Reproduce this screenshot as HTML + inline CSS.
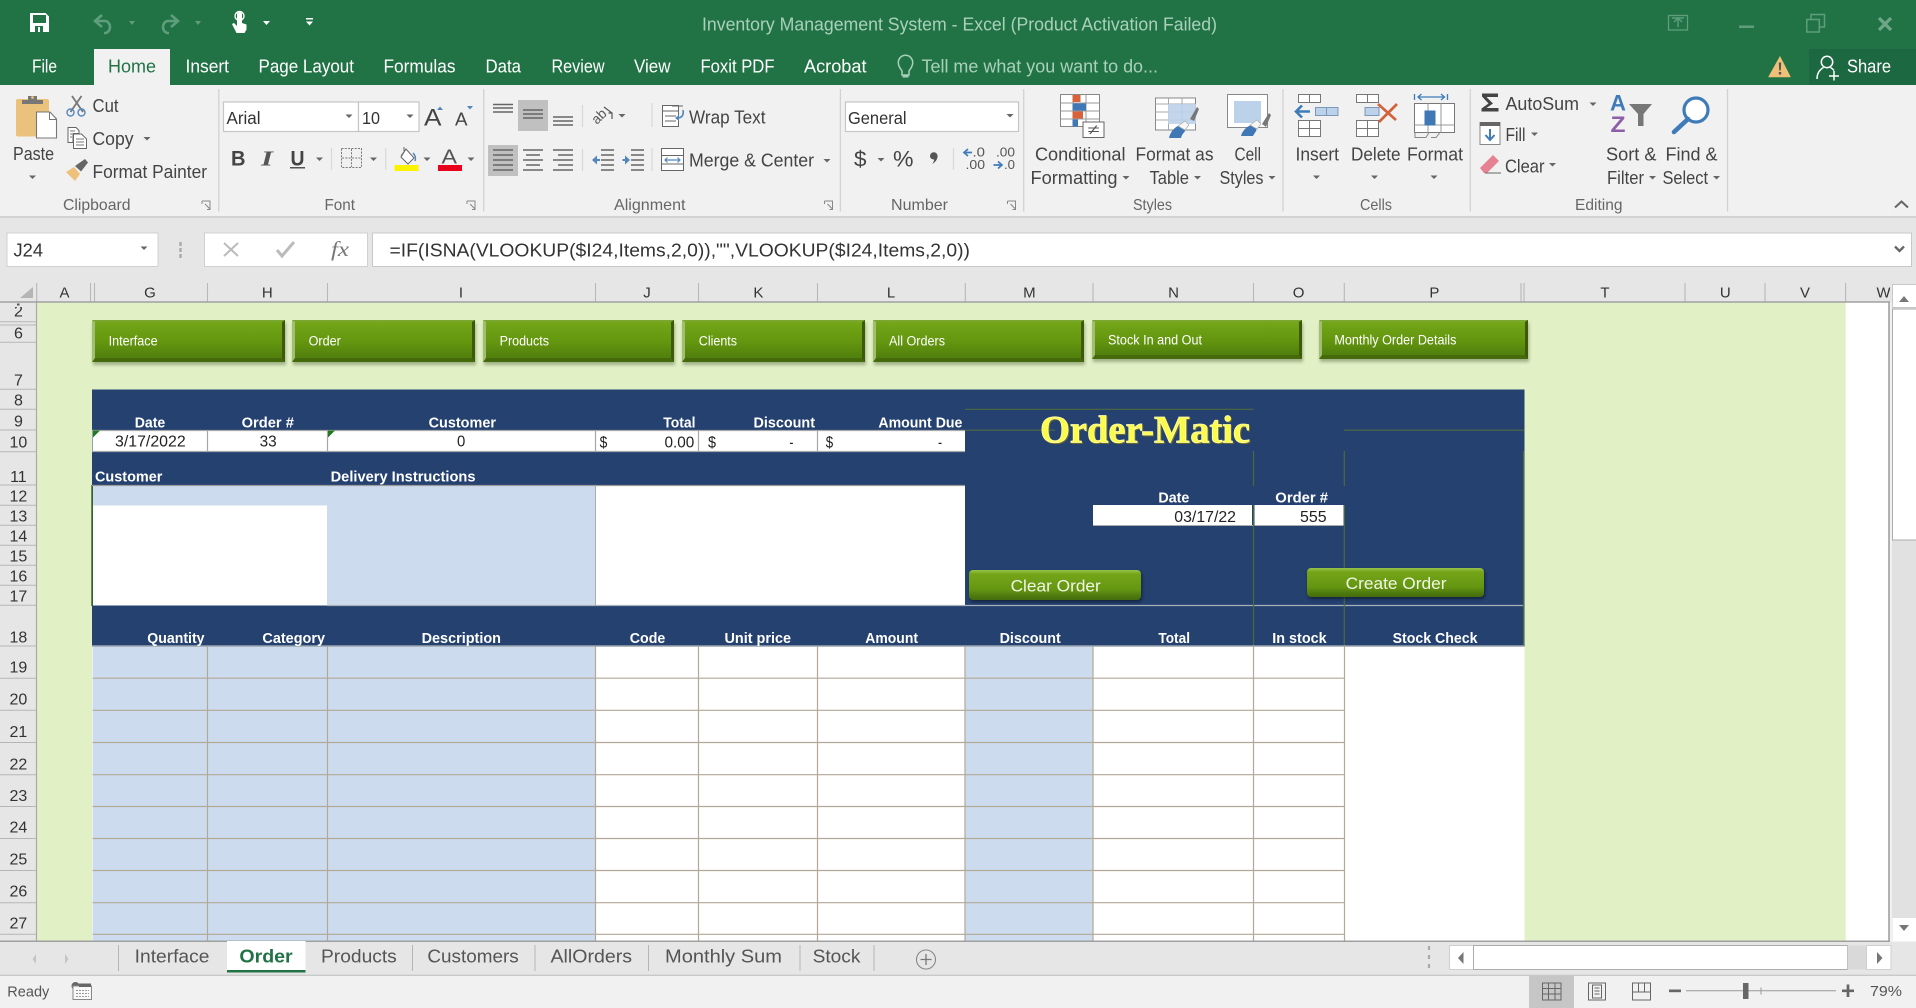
<!DOCTYPE html>
<html lang="en"><head><meta charset="utf-8"><title>Inventory Management System - Excel</title>
<style>
html,body{margin:0;padding:0;background:#f1f1f1}
#p{position:relative;width:1916px;height:1008px;overflow:hidden}
svg{position:absolute;left:0;top:0;display:block}
svg text{font-family:"Liberation Sans",Arial,sans-serif}
.r{font-size:18px;fill:#444}
.w{font-size:18px;fill:#fff}
.g{font-size:16px;fill:#666}
.c{font-size:15px;fill:#333;text-anchor:middle}
.n{font-size:16px;fill:#333;text-anchor:middle}
.l{font-size:14.5px;font-weight:bold;fill:#fff}
.d{font-size:16px;fill:#222}
.t{font-size:18px;fill:#555}
.k{fill:#666}
.a{stroke:#666;stroke-width:1.4;fill:none}
.ln{stroke:#b3a898;stroke-width:1.2}
.gl{stroke:#4d6a3f;stroke-width:1.2;fill:none}
.b{position:absolute;box-sizing:border-box;border-style:solid;border-width:2px 3px 4px 3px;border-color:#7ba62f #3d5a0a #456a0c #a2be72;background:linear-gradient(#74a619,#64960f 55%,#507f0d);box-shadow:1px 3px 3px rgba(40,60,20,.35)}
.o{position:absolute;box-sizing:border-box;border-radius:4px;background:linear-gradient(#98c24a 0,#74a518 14%,#659612 65%,#4c780e 88%,#446c0c);box-shadow:1px 2px 3px rgba(0,0,0,.45)}
.nb{font-size:13.5px;fill:#fff}
.ob{font-size:16.5px;fill:#f1f6e4}
</style></head><body><div id="p">
<svg width="1916" height="1008" viewBox="0 0 1916 1008">
<!-- base -->
<rect width="1916" height="1008" fill="#f1f1f1"/>
<rect width="1916" height="85" fill="#217346"/>
<rect x="94" y="49" width="76" height="36" fill="#f1f1f1"/>
<rect x="1809" y="49" width="107" height="36" fill="#1c6840"/>
<rect y="216" width="1916" height="2" fill="#d2d2d2"/>
<rect y="218" width="1916" height="84" fill="#e6e6e6"/>

<!-- QAT -->
<path d="M30 13h15.500l3.500 3.500V32H30z" fill="#fff"/><rect x="33" y="15" width="13" height="8" fill="#217346"/><rect x="35" y="26" width="8" height="6" fill="#217346"/><rect x="38" y="27" width="2" height="5" fill="#fff"/>
<path d="M97 21h9a6.500 6.500 0 0 1 0 12h-2M102 15l-7 6 7 6" fill="none" stroke="#5f9d7d" stroke-width="2.600"/>
<path d="M129 21h6l-3 4z" fill="#5f9d7d"/>
<path d="M176 21h-9a6.500 6.500 0 0 0 0 12h2M171 15l7 6-7 6" fill="none" stroke="#5f9d7d" stroke-width="2.600"/>
<path d="M195 21h6l-3 4z" fill="#5f9d7d"/>
<path d="M237 14a2.600 2.600 0 0 1 5 0v9l4.500 1.500v5l-2 3.500h-8l-4.500-9 2-1 3 3z" fill="#fff"/><circle cx="239.500" cy="16" r="4.500" fill="none" stroke="#fff" stroke-width="1.400"/>
<path d="M263 21h7l-3.500 4z" fill="#fff"/>
<path d="M306 18h7v1.500h-7zM306 21.500h7l-3.500 4z" fill="#fff"/>
<text x="702" y="30.500" font-size="18" fill="#a9d0b9" textLength="515" lengthAdjust="spacingAndGlyphs">Inventory Management System - Excel (Product Activation Failed)</text>
<!-- window controls -->
<rect x="1668.500" y="15.500" width="19" height="14.500" fill="none" stroke="#5f9d7d" stroke-width="1.300"/><path d="M1678 27v-8M1674 22l4-4 4 4M1672 18h12" fill="none" stroke="#5f9d7d" stroke-width="1.400"/>
<rect x="1739" y="25.500" width="15" height="2.500" fill="#5f9d7d"/>
<path d="M1806.800 19.500h12.500v12.500h-12.500zM1811 19v-4.500h13.500v12.500h-5" fill="none" stroke="#5f9d7d" stroke-width="1.500"/>
<path d="M1879 18l12 12M1891 18l-12 12" stroke="#6fa688" stroke-width="3.200" fill="none"/>
<!-- tabs -->
<g class="w">
<text class="w" x="32" y="72.500" textLength="25" lengthAdjust="spacingAndGlyphs">File</text>
<text x="108" y="72.500" font-size="18" fill="#217346" textLength="48" lengthAdjust="spacingAndGlyphs">Home</text>
<text class="w" x="185.500" y="72.500" textLength="43.500" lengthAdjust="spacingAndGlyphs">Insert</text>
<text class="w" x="258.500" y="72.500" textLength="95.500" lengthAdjust="spacingAndGlyphs">Page Layout</text>
<text class="w" x="383.500" y="72.500" textLength="72" lengthAdjust="spacingAndGlyphs">Formulas</text>
<text class="w" x="485.500" y="72.500" textLength="35.500" lengthAdjust="spacingAndGlyphs">Data</text>
<text class="w" x="551.500" y="72.500" textLength="53" lengthAdjust="spacingAndGlyphs">Review</text>
<text class="w" x="634" y="72.500" textLength="36.500" lengthAdjust="spacingAndGlyphs">View</text>
<text class="w" x="700.500" y="72.500" textLength="74" lengthAdjust="spacingAndGlyphs">Foxit PDF</text>
<text class="w" x="804" y="72.500" textLength="62.500" lengthAdjust="spacingAndGlyphs">Acrobat</text>
</g>
<text x="921.500" y="72.500" font-size="18" fill="#a9d0b9" textLength="236.500" lengthAdjust="spacingAndGlyphs">Tell me what you want to do...</text>
<path d="M902 75v-3.500c0-2-3.700-3.500-3.700-9a7.200 7.200 0 0 1 14.400 0c0 5.500-3.700 7-3.700 9V75z" fill="none" stroke="#a9d0b9" stroke-width="1.500"/><rect x="902.500" y="74.500" width="6" height="3" fill="#a9d0b9"/>
<path d="M1780 56l10.500 20.500a.5.5 0 0 1-.5.800h-21a.5.5 0 0 1-.5-.8z" fill="#eec078"/><path d="M1778.800 62.500h2.400l-.4 8h-1.600zM1778.800 72h2.400v2.500h-2.400z" fill="#555"/>
<circle cx="1827" cy="62" r="5.700" fill="none" stroke="#fff" stroke-width="1.500"/><path d="M1817 79c0-6 3-9.500 6.500-11.500M1830.500 67.500c1.500.8 2.500 1.800 3.500 3M1829 76h10M1834 71v9.500" fill="none" stroke="#fff" stroke-width="1.500"/>
<text class="w" x="1847" y="72.500" textLength="44" lengthAdjust="spacingAndGlyphs">Share</text>

<!-- separators -->
<path d="M218.800 89v122.500M483.700 89v122.500M840.400 89v122.500M1023.700 89v122.500M1283 89v122.500M1470.300 89v122.500M1727.500 89v122.500" stroke="#d2d2d2" stroke-width="1.300"/>
<path d="M582.500 105v22M582.500 149v22M652 103v24M652 148v23M331.500 148v22M385.700 148v22M953.500 148v22" stroke="#d9d9d9" stroke-width="1.200"/>

<!-- Clipboard -->
<rect x="16" y="99" width="33" height="37.500" rx="2" fill="#eac27b"/><path d="M22 104v-4h6v-4h9v4h6v4z" fill="#777"/><circle cx="32.500" cy="97.500" r="1.400" fill="#eac27b"/>
<path d="M36.500 112h13.500l6.500 7v19H36.500z" fill="#fff" stroke="#777" stroke-width="1.100"/><path d="M49.500 112v7.500h7" fill="none" stroke="#777"/>
<path d="M72 96l11 16M81.500 96l-11 16" stroke="#777" stroke-width="1.800" fill="none"/><circle cx="70.500" cy="112.500" r="3.500" fill="none" stroke="#5587bb" stroke-width="1.400"/><circle cx="81.500" cy="112.500" r="3.500" fill="none" stroke="#5587bb" stroke-width="1.400"/>
<path d="M68 127.500h8l3 3v3h-6v9h-5zM73.500 134h8l5 5v9.500h-13z" fill="#fff" stroke="#666" stroke-width="1"/><path d="M76 139h8M76 142h8M76 145h8M70 131h5M70 134h2M70 137h2" stroke="#777" stroke-width=".9"/>
<path d="M66 172l8-5 6 7-5 7z" fill="#eec17a"/><path d="M75 166l10-7 3 3.500-7 9z" fill="#666"/>
<text class="r" x="13" y="160" textLength="41" lengthAdjust="spacingAndGlyphs">Paste</text>
<text class="r" x="92.500" y="112" textLength="26" lengthAdjust="spacingAndGlyphs">Cut</text>
<text class="r" x="92.500" y="145" textLength="41" lengthAdjust="spacingAndGlyphs">Copy</text>
<text class="r" x="92.500" y="178" textLength="114.500" lengthAdjust="spacingAndGlyphs">Format Painter</text>
<text class="g" x="63" y="210" textLength="67.500" lengthAdjust="spacingAndGlyphs">Clipboard</text>
<path class="k" d="M29 175.500h7l-3.500 3.500zM143.500 137h7l-3.500 3.500z"/>
<!-- launchers -->
<g fill="none" stroke="#888" stroke-width="1"><path d="M202 201h8v8.500h-3M202 201v3M205 204l5 5"/><path d="M467 201h8v8.500h-3M467 201v3M470 204l5 5"/><path d="M824.500 201h8v8.500h-3M824.500 201v3M827.500 204l5 5"/><path d="M1007.500 201h8v8.500h-3M1007.500 201v3M1010.500 204l5 5"/></g>

<!-- Font -->
<rect x="223.500" y="102" width="135" height="29.500" fill="#fff" stroke="#c6c6c6" stroke-width="1.200"/><rect x="358.500" y="102" width="60.500" height="29.500" fill="#fff" stroke="#c6c6c6" stroke-width="1.200"/>
<text x="226.500" y="124" font-size="17.500" fill="#333" textLength="34" lengthAdjust="spacingAndGlyphs">Arial</text>
<text x="362" y="124" font-size="17.500" fill="#333" textLength="18" lengthAdjust="spacingAndGlyphs">10</text>
<rect x="845.500" y="102" width="173" height="29.500" fill="#fff" stroke="#c6c6c6" stroke-width="1.200"/>
<path class="k" d="M345.500 114.500h7l-3.500 3.500zM406.500 114.500h7l-3.500 3.500zM316 157.500h7l-3.500 3.500zM370 157.500h7l-3.500 3.500zM423.500 157.500h7l-3.500 3.500zM467.500 157.500h7l-3.500 3.500zM618.500 114h7l-3.500 3.500zM823.500 159h7l-3.500 3.500zM1006.500 114h7l-3.500 3.500zM877.500 158h7l-3.500 3.500zM1122.500 176h7l-3.500 3.500zM1194 176h7l-3.500 3.500zM1268.500 176h7l-3.500 3.500zM1313 175.500h7l-3.500 3.500zM1371 175.500h7l-3.500 3.500zM1430.500 175.500h7l-3.500 3.500zM1589.500 102.500h7l-3.500 3.500zM1531 132.500h7l-3.500 3.500zM1549 163h7l-3.500 3.500zM1649 176h7l-3.500 3.500zM1713 176h7l-3.500 3.500z"/>
<text x="424" y="125.500" font-size="24" fill="#444" textLength="17.500" lengthAdjust="spacingAndGlyphs">A</text>
<text x="455" y="125.500" font-size="18" fill="#444" textLength="12.500" lengthAdjust="spacingAndGlyphs">A</text>
<path d="M437 110l3-3.500 3 3.500z" fill="#4f86bd"/><path d="M467 106h6l-3 3.500z" fill="#4f86bd"/>
<text x="231" y="165.500" font-size="21" font-weight="bold" fill="#444" textLength="14.500" lengthAdjust="spacingAndGlyphs">B</text>
<text x="261" y="165.500" font-size="21" font-style="italic" font-weight="bold" style="font-family:'Liberation Serif',serif" fill="#555" textLength="12" lengthAdjust="spacingAndGlyphs">I</text>
<text x="290.500" y="165.500" font-size="21" font-weight="bold" fill="#444" textLength="14" lengthAdjust="spacingAndGlyphs">U</text><rect x="290" y="167" width="15" height="1.500" fill="#555"/>
<rect x="341.500" y="148.500" width="20" height="19" fill="none" stroke="#777" stroke-dasharray="2 1.300"/><path d="M351.500 149v18M342 158h19" stroke="#777" stroke-dasharray="2 1.300"/>
<path d="M406 149l8 9-6 6-7-7zM401 156l5-7M404 147v4" fill="#fff" stroke="#666" stroke-width="1"/><path d="M413 153c2 2 3 5 2 8" stroke="#4f86bd" stroke-width="1.500" fill="none"/>
<rect x="394.500" y="165" width="24" height="6" fill="#fdf200"/>
<text x="441.500" y="163.500" font-size="20" fill="#555" textLength="15.500" lengthAdjust="spacingAndGlyphs">A</text><rect x="438" y="165" width="24" height="6" fill="#e8001c"/>
<text class="g" x="324.500" y="210" textLength="30.500" lengthAdjust="spacingAndGlyphs">Font</text>

<!-- Alignment -->
<rect x="518" y="100" width="30" height="31" fill="#c0c0c0"/><rect x="488" y="145" width="30" height="31" fill="#c0c0c0"/>
<path class="a" d="M493 104.500h20M493 108h20M493 112h20M523 110h20M523 114h20M523 118h20M553 117h20M553 121h20M553 125h20"/>
<path class="a" stroke-width="1.300" d="M493 150h20M493 155h20M493 160h20M493 165h20M493 170h20M523 150h20M526 155h14M523 160h20M526 165h14M523 170h20M553 150h20M558 155h15M553 160h20M558 165h15M553 170h20"/>
<text x="0" y="0" font-size="14" fill="#555" transform="translate(597 125) rotate(-45)" textLength="15" lengthAdjust="spacingAndGlyphs">ab</text><path d="M604 107l8 6v6M612 113l-3.500 0" stroke="#555" stroke-width="1.200" fill="none"/>
<path class="a" d="M601 150h13M601 155h13M601 160h13M601 165h13M601 170h13M631 150h13M631 155h13M631 160h13M631 165h13M631 170h13"/>
<path d="M592 160l5-4.500v9z" fill="#4f86bd"/><path d="M595 160h5" stroke="#4f86bd" stroke-width="2"/><path d="M630 160l-5-4.500v9z" fill="#4f86bd"/><path d="M622.500 160h4" stroke="#4f86bd" stroke-width="2"/>
<rect x="662.500" y="105.500" width="16" height="21" fill="#fff" stroke="#666"/><path d="M662.500 111h16M665 116h11M665 121h11M672 106h11" stroke="#666" fill="none"/><path d="M677 118c5 0 7-3 6-8" stroke="#4f86bd" stroke-width="1.600" fill="none"/><path d="M675 118l4-3v6z" fill="#4f86bd"/>
<text class="r" x="689" y="123.300" textLength="76.500" lengthAdjust="spacingAndGlyphs">Wrap Text</text>
<rect x="661.500" y="148.500" width="22" height="22" fill="#fff" stroke="#666"/><path d="M661.500 155.500h22M661.500 164h22" stroke="#666" fill="none"/><path d="M665 160h15M667.500 157.500l-2.500 2.500 2.500 2.500M677.500 157.500l2.500 2.500-2.500 2.500" stroke="#4f86bd" stroke-width="1.200" fill="none"/>
<text class="r" x="689" y="166.700" textLength="125" lengthAdjust="spacingAndGlyphs">Merge &amp; Center</text>
<text class="g" x="614" y="210" textLength="71.500" lengthAdjust="spacingAndGlyphs">Alignment</text>

<!-- Number -->
<text x="848" y="124" font-size="17.500" fill="#333" textLength="58.500" lengthAdjust="spacingAndGlyphs">General</text>
<text x="854" y="166.500" font-size="22" fill="#444" textLength="12.500" lengthAdjust="spacingAndGlyphs">$</text>
<text x="893" y="166.500" font-size="22" fill="#444" textLength="20.500" lengthAdjust="spacingAndGlyphs">%</text>
<path d="M930 156a3.800 3.800 0 1 1 7.600 0c0 3.500-2.500 6.500-5.500 8 1.200-1.500 2-3 2-4.500-2.500 0-4.100-1.500-4.100-3.500z" fill="#555"/>
<g font-size="12.500" fill="#555"><text x="972.500" y="156.500" textLength="12.500" lengthAdjust="spacingAndGlyphs">.0</text><text x="965.500" y="169" textLength="19.500" lengthAdjust="spacingAndGlyphs">.00</text><text x="996" y="156.500" textLength="19" lengthAdjust="spacingAndGlyphs">.00</text><text x="1004" y="169" textLength="11" lengthAdjust="spacingAndGlyphs">.0</text></g>
<path d="M968 149l-4 3.500 4 3.500M964.500 152.500h7.500M998 161.500l4 3.500-4 3.500M1001.500 165h-8" fill="none" stroke="#3f7bb9" stroke-width="1.700"/>
<text class="g" x="891" y="210" textLength="57" lengthAdjust="spacingAndGlyphs">Number</text>

<!-- Styles -->
<rect x="1060.500" y="94.500" width="39" height="32" fill="#fff" stroke="#888"/><path d="M1073 94.500v32M1086 94.500v32M1060.500 103h39M1060.500 111h39M1060.500 119h39" stroke="#999" fill="none"/>
<rect x="1072.500" y="95" width="8" height="7" fill="#d9623b"/><rect x="1072.500" y="103.500" width="13.500" height="7" fill="#4077b5"/><rect x="1072.500" y="111.500" width="10.500" height="7" fill="#d9623b"/><rect x="1072.500" y="119.500" width="5.500" height="7" fill="#4077b5"/>
<rect x="1083" y="122" width="21" height="15.500" fill="#fff" stroke="#666"/><text x="1087.500" y="134.500" font-size="14" fill="#555" textLength="12" lengthAdjust="spacingAndGlyphs">≠</text>
<rect x="1155.500" y="98" width="40" height="32" fill="#fff" stroke="#888"/><path d="M1155.500 104h40M1155.500 112h40M1155.500 120h40M1168.500 98v32M1182 98v32" stroke="#a8a8a8"/><rect x="1168" y="104" width="28" height="20" fill="#bcd1ea" opacity=".9"/>
<path d="M1190 119l7-12 2 2-5 12z" fill="#777"/><path d="M1169 138c1-5 5-11 11-13 3 0 6 3 5 6-1 2-3 3-4 7z" fill="#4077b5"/><path d="M1178 126l7-5 4 4-4 5z" fill="#f6f6f6" stroke="#aaa" stroke-width=".7"/>
<rect x="1227.500" y="94.500" width="40" height="33" fill="#fff" stroke="#888"/><rect x="1234" y="101" width="27" height="22" fill="#bcd1ea"/>
<path d="M1262 124l7-11 2 2-5 12z" fill="#777"/><path d="M1241 136c1-4 5-10 11-11 3 0 6 2 4 6-1 2-2 3-3 5z" fill="#4077b5"/><path d="M1250 125l7-5 4 4-4 5z" fill="#f6f6f6" stroke="#aaa" stroke-width=".7"/>
<text class="r" x="1035" y="160.700" textLength="90.500" lengthAdjust="spacingAndGlyphs">Conditional</text>
<text class="r" x="1030.500" y="184" textLength="87" lengthAdjust="spacingAndGlyphs">Formatting</text>
<text class="r" x="1135.500" y="160.700" textLength="78" lengthAdjust="spacingAndGlyphs">Format as</text>
<text class="r" x="1149.500" y="184" textLength="39.500" lengthAdjust="spacingAndGlyphs">Table</text>
<text class="r" x="1234.500" y="160.700" textLength="26.500" lengthAdjust="spacingAndGlyphs">Cell</text>
<text class="r" x="1219.500" y="184" textLength="44" lengthAdjust="spacingAndGlyphs">Styles</text>
<text class="g" x="1133" y="210" textLength="39" lengthAdjust="spacingAndGlyphs">Styles</text>

<!-- Cells -->
<g fill="#fff" stroke="#777" stroke-width="1"><rect x="1298.500" y="94.500" width="22" height="8"/><path d="M1309.500 94.500v8"/><rect x="1298.500" y="120.500" width="22" height="16"/><path d="M1309.500 120.500v16M1298.500 128.500h22"/>
<rect x="1356.500" y="94.500" width="22" height="8"/><path d="M1367.500 94.500v8"/><rect x="1356.500" y="120.500" width="22" height="16"/><path d="M1367.500 120.500v16M1356.500 128.500h22"/></g>
<rect x="1315.500" y="107.500" width="22.500" height="8" fill="#bcd1ea" stroke="#7d97b8"/><path d="M1326.500 107.500v8" stroke="#7d97b8"/>
<path d="M1310 111.500h-13M1302 105.500l-6 6 6 6" fill="none" stroke="#3f7bb9" stroke-width="2.600"/>
<rect x="1365" y="107.500" width="14" height="8" fill="#bcd1ea" stroke="#7d97b8"/>
<path d="M1378 104l18 16M1397 104l-18 18" stroke="#d2623e" stroke-width="2.700" fill="none"/>
<path d="M1414.500 94v6M1447.500 94v6M1418 97h26M1421.500 94l-3.500 3 3.500 3M1441 94l3.500 3-3.500 3" fill="none" stroke="#3f7bb9" stroke-width="1.300"/>
<rect x="1414.500" y="103.500" width="40" height="29" fill="#fff" stroke="#777"/><path d="M1414.500 125h40M1428 103.500v29M1441 103.500v29" stroke="#999"/><rect x="1424.500" y="110.500" width="11" height="15" fill="#4077b5"/><path d="M1415 132.500v5h11l3-5M1431 137.500h5l4-5" fill="none" stroke="#888"/>
<text class="r" x="1295.500" y="160.700" textLength="43.500" lengthAdjust="spacingAndGlyphs">Insert</text>
<text class="r" x="1351" y="160.700" textLength="49.500" lengthAdjust="spacingAndGlyphs">Delete</text>
<text class="r" x="1407" y="160.700" textLength="56" lengthAdjust="spacingAndGlyphs">Format</text>
<text class="g" x="1360" y="210" textLength="32" lengthAdjust="spacingAndGlyphs">Cells</text>

<!-- Editing -->
<path d="M1482 93.500h16v3.500h-11.500l6.500 6.500-6.500 4.500h12v3.500h-17v-3l7-5-6.500-7z" fill="#444"/>
<text class="r" x="1505.500" y="110" textLength="73.500" lengthAdjust="spacingAndGlyphs">AutoSum</text>
<rect x="1480" y="122.500" width="20" height="22" fill="#fff" stroke="#888"/><rect x="1480" y="122" width="20" height="4" fill="#666"/><path d="M1490 129v11M1485.500 135l4.500 5 4.500-5" fill="none" stroke="#3f7bb9" stroke-width="2"/>
<text class="r" x="1505.500" y="141" textLength="20" lengthAdjust="spacingAndGlyphs">Fill</text>
<path d="M1480 168l13-13 6 6-12 12h-3z" fill="#e68193"/><path d="M1485 173h16" stroke="#666" stroke-width="1"/>
<text class="r" x="1505" y="172.300" textLength="39.500" lengthAdjust="spacingAndGlyphs">Clear</text>
<text x="1610" y="110.700" font-size="22" font-weight="bold" fill="#3f7bb9" textLength="16" lengthAdjust="spacingAndGlyphs">A</text>
<text x="1610.500" y="132" font-size="22" font-weight="bold" fill="#8d5fa8" textLength="15" lengthAdjust="spacingAndGlyphs">Z</text>
<path d="M1629 104h23l-8.500 10v12h-5.500v-12z" fill="#777"/>
<circle cx="1696" cy="110" r="12" fill="#fff" stroke="#3f7bb9" stroke-width="3.200"/><path d="M1688 119l-14 13" stroke="#3f7bb9" stroke-width="4.600" stroke-linecap="round"/>
<text class="r" x="1606" y="160.700" textLength="50.500" lengthAdjust="spacingAndGlyphs">Sort &amp;</text>
<text class="r" x="1607" y="184" textLength="37" lengthAdjust="spacingAndGlyphs">Filter</text>
<text class="r" x="1665.500" y="160.700" textLength="52" lengthAdjust="spacingAndGlyphs">Find &amp;</text>
<text class="r" x="1662.500" y="184" textLength="45.500" lengthAdjust="spacingAndGlyphs">Select</text>
<text class="g" x="1575" y="210" textLength="47.500" lengthAdjust="spacingAndGlyphs">Editing</text>
<path d="M1895 207.500l6.500-6 6.500 6" fill="none" stroke="#666" stroke-width="2"/>

<!-- formula bar -->
<rect x="7" y="233" width="151" height="33.500" fill="#fff" stroke="#d0d0d0"/>
<rect x="204.500" y="233" width="163" height="33.500" fill="#fff" stroke="#d0d0d0"/>
<rect x="372.500" y="233" width="1539" height="33.500" fill="#fff" stroke="#c8c8c8"/>
<text x="13.500" y="256.500" font-size="18" fill="#333" textLength="29.500" lengthAdjust="spacingAndGlyphs">J24</text>
<path class="k" d="M140.500 246.500h7l-3.500 3.500z"/>
<path d="M180.500 242v4M180.500 248v4M180.500 254v4" stroke="#aaa" stroke-width="2.400" fill="none"/>
<path d="M224 243l14 13M238 243l-14 13" stroke="#bbb" stroke-width="2" fill="none"/>
<path d="M277 250l5 6 12-14" stroke="#bbb" stroke-width="3" fill="none"/>
<text x="331" y="256" font-size="21" font-style="italic" style="font-family:'Liberation Serif',serif" fill="#777" textLength="18" lengthAdjust="spacingAndGlyphs">fx</text>
<text x="389.500" y="256.500" font-size="18" fill="#333" textLength="580.500" lengthAdjust="spacingAndGlyphs">=IF(ISNA(VLOOKUP($I24,Items,2,0)),"",VLOOKUP($I24,Items,2,0))</text>
<path d="M1895 246.500l4.500 4.500 4.500-4.500" fill="none" stroke="#666" stroke-width="2.300"/>

<!-- sheet backgrounds -->
<rect x="36.700" y="302" width="1852" height="639" fill="#fff"/>
<rect x="36.700" y="302" width="1809" height="639" fill="#e2f0c6"/>
<rect x="92" y="646" width="1432.500" height="295" fill="#fff"/>
<rect x="92" y="389.500" width="1432.500" height="257" fill="#244170"/>
<!-- row 10 -->
<rect x="92.500" y="430.500" width="872.500" height="21" fill="#fff"/>
<path d="M92 430.500h873M92 451.500h873M207.500 430v22M327.500 430v22M595.500 430v22M698.500 430v22M817.500 430v22" stroke="#a8a8a8" stroke-width="1.200"/>
<path d="M93 430.500h7l-7 7zM328 430.500h7l-7 7z" fill="#217a21"/>
<!-- customer panel -->
<rect x="93" y="485.500" width="234.500" height="20" fill="#ccdcee"/>
<rect x="93" y="505.500" width="234.500" height="100" fill="#fff"/>
<rect x="327" y="485.500" width="268.500" height="120" fill="#ccdcee"/>
<rect x="595.500" y="485.500" width="369.500" height="120" fill="#fff"/>
<path d="M92 485v121" stroke="#3f6a24" stroke-width="1.500"/>
<path d="M92 485.500h873" stroke="#9a9a9a" stroke-width="1.200"/>
<path d="M595.500 485v121" stroke="#aaa" stroke-width="1"/>
<path d="M327 605.500h1196" stroke="#a8b0ba" stroke-width="1.200"/>
<!-- green rules -->
<path class="gl" d="M965 409.300h288.500M965 430.200h90M1344 430.200h180M1253.500 451v35M1344.300 451v35M1523.500 451v195M1253.500 505v141M1344.300 505v141"/>
<rect x="1093" y="505" width="159" height="20.500" fill="#fff"/><rect x="1254.500" y="505" width="89" height="20.500" fill="#fff"/>
<path d="M1093 525.500h160M1254.500 525.500h89" stroke="#aaa"/>
<!-- grid -->
<rect x="92.500" y="646.500" width="503" height="294.500" fill="#ccdcee"/>
<rect x="965" y="646.500" width="128" height="294.500" fill="#ccdcee"/>
<path d="M92 646h1432" stroke="#9aa3ad" stroke-width="1.600"/>
<path class="ln" d="M92.500 678.200h1252M92.500 710.300h1252M92.500 742.500h1252M92.500 774.700h1252M92.500 806.500h1252M92.500 838.500h1252M92.500 870.500h1252M92.500 902.700h1252M92.500 934.300h1252M207.500 646v295M327.500 646v295M595.500 646v295M698.500 646v295M817.500 646v295M965 646v295M1093 646v295M1253.500 646v295M1344.500 646v295"/>

<!-- col header -->
<rect x="0" y="281" width="1891" height="21" fill="#e6e6e6"/>
<path d="M36.700 283v19M90.500 283v19M94.500 283v19M207.500 283v19M327.500 283v19M595.500 283v19M698.500 283v19M817.500 283v19M965.300 283v19M1093 283v19M1253.500 283v19M1344.300 283v19M1521 283v19M1524 283v19M1685 283v19M1765 283v19M1845.600 283v19" stroke="#b8b8b8" stroke-width="1.100"/>
<path d="M20 298h13v-11z" fill="#b5b5b5"/>
<g>
<text class="c" x="64.500" y="297.300">A</text><text class="c" x="150" y="297.300">G</text><text class="c" x="267.300" y="297.300">H</text><text class="c" x="461" y="297.300">I</text><text class="c" x="647" y="297.300">J</text><text class="c" x="758.400" y="297.300">K</text><text class="c" x="891" y="297.300">L</text><text class="c" x="1029.400" y="297.300">M</text><text class="c" x="1173.500" y="297.300">N</text><text class="c" x="1298.600" y="297.300">O</text><text class="c" x="1434.400" y="297.300">P</text><text class="c" x="1605" y="297.300">T</text><text class="c" x="1725.300" y="297.300">U</text><text class="c" x="1805" y="297.300">V</text><text class="c" x="1883.500" y="297.300" textLength="14" lengthAdjust="spacingAndGlyphs">W</text>
</g>
<rect x="1890" y="281" width="2" height="21" fill="#e6e6e6"/>

<!-- row header -->
<rect x="0" y="302" width="36.700" height="639" fill="#e6e6e6"/>
<text class="n" x="18.400" y="316.600">2</text>
<rect x="0" y="302" width="36.700" height="5" fill="#e6e6e6"/>
<rect x="17" y="303.500" width="2.500" height="2" fill="#555"/>
<path d="M0 302h1890" stroke="#a0a0a0" stroke-width="1.400"/>
<path d="M36.500 302v639" stroke="#a8a8a8" stroke-width="1.200"/>
<path d="M0 321.700h36.500M0 325h36.500M0 342.300h36.500M0 389.300h36.500M0 409.300h36.500M0 430h36.500M0 451.700h36.500M0 485h36.500M0 505.300h36.500M0 525.300h36.500M0 545.300h36.500M0 565.300h36.500M0 585.300h36.500M0 605.300h36.500M0 646h36.500M0 678.200h36.500M0 710.300h36.500M0 742.500h36.500M0 774.700h36.500M0 806.500h36.500M0 838.500h36.500M0 870.500h36.500M0 902.700h36.500M0 934.300h36.500" stroke="#b5b5b5" stroke-width="1"/>
<g transform="translate(0 -.6)">
<text class="n" x="18.400" y="339">6</text><text class="n" x="18.400" y="386">7</text><text class="n" x="18.400" y="406.300">8</text><text class="n" x="18.400" y="427.300">9</text><text class="n" x="18.400" y="448.300">10</text><text class="n" x="18.400" y="482.700">11</text><text class="n" x="18.400" y="502.300">12</text><text class="n" x="18.400" y="522.300">13</text><text class="n" x="18.400" y="542.200">14</text><text class="n" x="18.400" y="562">15</text><text class="n" x="18.400" y="582">16</text><text class="n" x="18.400" y="602">17</text><text class="n" x="18.400" y="643.300">18</text><text class="n" x="18.400" y="673.300">19</text><text class="n" x="18.400" y="705">20</text><text class="n" x="18.400" y="737.500">21</text><text class="n" x="18.400" y="770">22</text><text class="n" x="18.400" y="801.500">23</text><text class="n" x="18.400" y="833">24</text><text class="n" x="18.400" y="865">25</text><text class="n" x="18.400" y="897">26</text><text class="n" x="18.400" y="929">27</text>
</g>

<!-- table labels -->
<text class="l" x="134.700" y="427.300" textLength="30.600" lengthAdjust="spacingAndGlyphs">Date</text>
<text class="l" x="241.600" y="427.300" textLength="52.300" lengthAdjust="spacingAndGlyphs">Order #</text>
<text class="l" x="428.600" y="427.300" textLength="67.400" lengthAdjust="spacingAndGlyphs">Customer</text>
<text class="l" x="663.300" y="427.300" textLength="32.200" lengthAdjust="spacingAndGlyphs">Total</text>
<text class="l" x="753.500" y="427.300" textLength="61.500" lengthAdjust="spacingAndGlyphs">Discount</text>
<text class="l" x="878.400" y="427.300" textLength="84" lengthAdjust="spacingAndGlyphs">Amount Due</text>
<text class="d" x="115" y="446.700" textLength="70.700" lengthAdjust="spacingAndGlyphs">3/17/2022</text>
<text class="d" x="259.600" y="446.700" textLength="17.100" lengthAdjust="spacingAndGlyphs">33</text>
<text class="d" x="457" y="446.700" textLength="8.300" lengthAdjust="spacingAndGlyphs">0</text>
<text class="d" x="599.600" y="447.700" textLength="7.700" lengthAdjust="spacingAndGlyphs">$</text>
<text class="d" x="664.500" y="447.700" textLength="29.800" lengthAdjust="spacingAndGlyphs">0.00</text>
<text class="d" x="708" y="447.700" textLength="8" lengthAdjust="spacingAndGlyphs">$</text>
<text class="d" x="789.400" y="447.700" textLength="4.100" lengthAdjust="spacingAndGlyphs">-</text>
<text class="d" x="825.700" y="447.700" textLength="7.400" lengthAdjust="spacingAndGlyphs">$</text>
<text class="d" x="938" y="447.700" textLength="4.100" lengthAdjust="spacingAndGlyphs">-</text>
<text class="l" x="95" y="481.700" textLength="67.400" lengthAdjust="spacingAndGlyphs">Customer</text>
<text class="l" x="330.600" y="481.700" textLength="144.900" lengthAdjust="spacingAndGlyphs">Delivery Instructions</text>
<text x="1040" y="442.300" font-size="39" font-weight="bold" style="font-family:'Liberation Serif',serif;filter:drop-shadow(1px 1px 0 #6f6f24)" fill="#fbfb4a" stroke="#fffcb0" stroke-width=".8" textLength="210" lengthAdjust="spacingAndGlyphs">Order-Matic</text>
<text class="l" x="1158.400" y="502.300" textLength="31" lengthAdjust="spacingAndGlyphs">Date</text>
<text class="l" x="1275.300" y="502.300" textLength="52.700" lengthAdjust="spacingAndGlyphs">Order #</text>
<text class="d" x="1174.300" y="522" textLength="61.700" lengthAdjust="spacingAndGlyphs">03/17/22</text>
<text class="d" x="1300" y="522" textLength="26.600" lengthAdjust="spacingAndGlyphs">555</text>
<text class="l" x="147.300" y="642.800" textLength="57.200" lengthAdjust="spacingAndGlyphs">Quantity</text>
<text class="l" x="262.400" y="642.800" textLength="62.600" lengthAdjust="spacingAndGlyphs">Category</text>
<text class="l" x="421.600" y="642.800" textLength="79.400" lengthAdjust="spacingAndGlyphs">Description</text>
<text class="l" x="629.800" y="642.800" textLength="35.500" lengthAdjust="spacingAndGlyphs">Code</text>
<text class="l" x="724.500" y="642.800" textLength="66.500" lengthAdjust="spacingAndGlyphs">Unit price</text>
<text class="l" x="865.300" y="642.800" textLength="52.700" lengthAdjust="spacingAndGlyphs">Amount</text>
<text class="l" x="999.600" y="642.800" textLength="61.200" lengthAdjust="spacingAndGlyphs">Discount</text>
<text class="l" x="1158.400" y="642.800" textLength="31.600" lengthAdjust="spacingAndGlyphs">Total</text>
<text class="l" x="1272.300" y="642.800" textLength="54.300" lengthAdjust="spacingAndGlyphs">In stock</text>
<text class="l" x="1392.600" y="642.800" textLength="84.900" lengthAdjust="spacingAndGlyphs">Stock Check</text>

<!-- right scrollbar -->
<rect x="1892" y="284" width="24" height="657" fill="#e1e1e1"/>
<path d="M1889 302v639" stroke="#a0a0a0" stroke-width="1.600"/>
<rect x="1892.500" y="284.500" width="24" height="23" fill="#fff" stroke="#c8c8c8"/>
<rect x="1892.500" y="309" width="24" height="231" fill="#fff" stroke="#ababab"/>
<rect x="1892.500" y="918" width="24" height="23" fill="#fff"/>
<path d="M1899 302h10l-5-6zM1899 925h10l-5 6z" fill="#777"/>

<!-- tabs bar -->
<rect y="942" width="1916" height="33" fill="#e6e6e6"/>
<rect y="975" width="1916" height="33" fill="#f1f1f1"/>
<path d="M0 941.300h1890" stroke="#a0a0a0" stroke-width="1.500"/>
<path d="M0 975.300h1916" stroke="#c9c9c9" stroke-width="1.400"/>
<path d="M36 954v10l-3.500-5zM65 954v10l3.500-5z" fill="#c4c4c4"/>
<path d="M118.500 945v26M412.500 945v26M535 945v26M648.500 945v26M800 945v26M874 945v26" stroke="#b5b5b5" stroke-width="1"/>
<rect x="227" y="941" width="78.500" height="29" fill="#fff"/><rect x="227" y="970" width="78.500" height="2.500" fill="#217346"/>
<text class="t" x="134.700" y="962.700" textLength="74.700" lengthAdjust="spacingAndGlyphs">Interface</text>
<text x="239.400" y="962.700" font-size="18" font-weight="bold" fill="#217346" textLength="53.300" lengthAdjust="spacingAndGlyphs">Order</text>
<text class="t" x="321" y="962.700" textLength="75.800" lengthAdjust="spacingAndGlyphs">Products</text>
<text class="t" x="427.400" y="962.700" textLength="91.300" lengthAdjust="spacingAndGlyphs">Customers</text>
<text class="t" x="550.500" y="962.700" textLength="81.500" lengthAdjust="spacingAndGlyphs">AllOrders</text>
<text class="t" x="665" y="962.700" textLength="117" lengthAdjust="spacingAndGlyphs">Monthly Sum</text>
<text class="t" x="812.600" y="962.700" textLength="47.800" lengthAdjust="spacingAndGlyphs">Stock</text>
<circle cx="926" cy="959.500" r="9.500" fill="none" stroke="#888" stroke-width="1.100"/><path d="M926 954v11M920.500 959.500h11" stroke="#777" stroke-width="1.300"/>
<path d="M1429 946v4M1429 955v4M1429 964v4" stroke="#aaa" stroke-width="2.200"/>
<rect x="1449.500" y="945.500" width="24" height="24" fill="#fff" stroke="#d0d0d0"/><rect x="1473.500" y="945.500" width="374" height="24" fill="#fff" stroke="#ababab"/><rect x="1847.500" y="945.500" width="19" height="24" fill="#d9d9d9"/><rect x="1866.500" y="945.500" width="24.500" height="24" fill="#fff" stroke="#d0d0d0"/>
<path d="M1463.500 952v12l-5.500-6zM1877 952v12l5.500-6z" fill="#777"/>

<!-- status -->
<text x="7.300" y="996.700" font-size="14.500" fill="#555" textLength="42" lengthAdjust="spacingAndGlyphs">Ready</text>
<circle cx="75.500" cy="986" r="4" fill="#666"/><rect x="73" y="986" width="18.500" height="13.500" fill="#f8f8f8" stroke="#888"/><path d="M79 983.500h12v3.500h-12z" fill="#666"/><path d="M76 990.500h13M76 993.500h13M76 996.500h13" stroke="#999" stroke-dasharray="2 1"/>
<rect x="1529" y="976" width="45" height="32" fill="#c6c6c6"/>
<rect x="1542.500" y="983" width="18.500" height="17" fill="none" stroke="#666"/><path d="M1548.500 983v17M1555 983v17M1542.500 988.500h18.500M1542.500 994h18.500" stroke="#666"/>
<rect x="1588.500" y="983" width="17" height="17" fill="none" stroke="#666"/><rect x="1592.500" y="985" width="9" height="13" fill="none" stroke="#666"/><path d="M1594.500 988h5M1594.500 991h5M1594.500 994h5" stroke="#666"/>
<rect x="1632.500" y="983" width="18" height="17" fill="none" stroke="#666"/><path d="M1638.500 983v9h6v-9M1632.500 992h18" fill="none" stroke="#666"/>
<rect x="1669" y="989.500" width="12" height="2.700" fill="#666"/>
<path d="M1686 990.800h150M1761 987.500v7" stroke="#999" stroke-width="1"/><rect x="1743" y="983" width="5.500" height="16" fill="#666"/>
<path d="M1842 990.800h12M1848 984.500v12.500" stroke="#666" stroke-width="2.700"/>
<text x="1870" y="996" font-size="15" fill="#555" textLength="32" lengthAdjust="spacingAndGlyphs">79%</text>
</svg>

<!-- buttons -->
<div class="b" style="left:92px;top:320px;width:192.500px;height:41.500px"></div>
<div class="b" style="left:292px;top:320px;width:183px;height:41.500px"></div>
<div class="b" style="left:483px;top:320px;width:191px;height:41.500px"></div>
<div class="b" style="left:682px;top:320px;width:182.500px;height:41.500px"></div>
<div class="b" style="left:872.500px;top:320px;width:211.500px;height:41.500px"></div>
<div class="b" style="left:1091.500px;top:320px;width:210px;height:39px"></div>
<div class="b" style="left:1318.500px;top:320px;width:209.500px;height:39px"></div>
<div class="o" style="left:969px;top:570px;width:172px;height:30px"></div>
<div class="o" style="left:1307px;top:568px;width:177px;height:29px"></div>

<svg width="1916" height="1008" viewBox="0 0 1916 1008" style="pointer-events:none">
<text class="nb" x="108.600" y="345.700" textLength="49" lengthAdjust="spacingAndGlyphs">Interface</text>
<text class="nb" x="308.600" y="345.700" textLength="32.200" lengthAdjust="spacingAndGlyphs">Order</text>
<text class="nb" x="499.600" y="345.700" textLength="49.400" lengthAdjust="spacingAndGlyphs">Products</text>
<text class="nb" x="698.800" y="345.700" textLength="38.200" lengthAdjust="spacingAndGlyphs">Clients</text>
<text class="nb" x="889" y="345.700" textLength="56" lengthAdjust="spacingAndGlyphs">All Orders</text>
<text class="nb" x="1108" y="344.700" textLength="94" lengthAdjust="spacingAndGlyphs">Stock In and Out</text>
<text class="nb" x="1334.400" y="344.700" textLength="122" lengthAdjust="spacingAndGlyphs">Monthly Order Details</text>
<text class="ob" x="1010.600" y="591.700" textLength="90.200" lengthAdjust="spacingAndGlyphs">Clear Order</text>
<text class="ob" x="1345.600" y="589" textLength="100.900" lengthAdjust="spacingAndGlyphs">Create Order</text>
</svg>
</div></body></html>
